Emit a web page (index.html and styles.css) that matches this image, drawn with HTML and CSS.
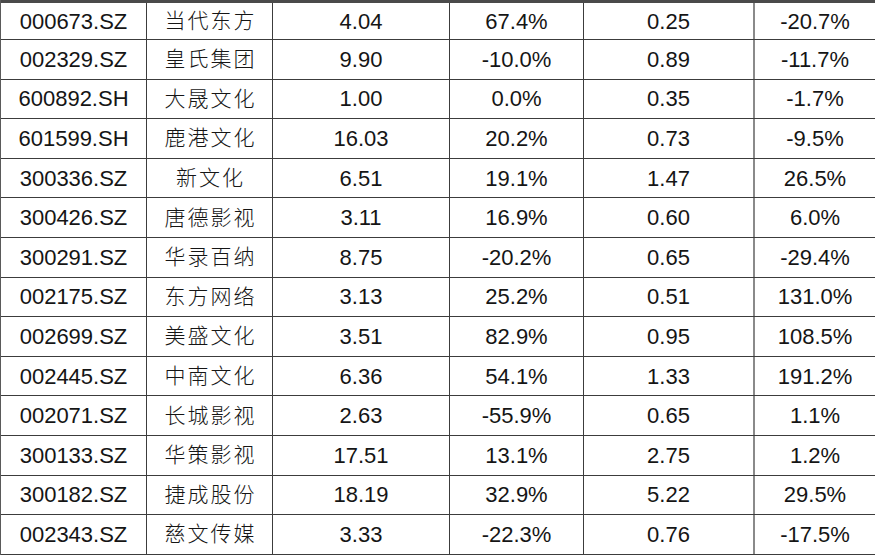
FILE: index.html
```html
<!DOCTYPE html>
<html lang="zh-CN">
<head>
<meta charset="utf-8">
<title>股票表</title>
<link rel="stylesheet" href="styles.css">
</head>
<body>
<div class="sheet">
  <div class="row"><div class="c code">000673.SZ</div><div class="c name">当代东方</div><div class="c">4.04</div><div class="c">67.4%</div><div class="c">0.25</div><div class="c">-20.7%</div></div>
  <div class="row"><div class="c code">002329.SZ</div><div class="c name">皇氏集团</div><div class="c">9.90</div><div class="c">-10.0%</div><div class="c">0.89</div><div class="c">-11.7%</div></div>
  <div class="row"><div class="c code">600892.SH</div><div class="c name">大晟文化</div><div class="c">1.00</div><div class="c">0.0%</div><div class="c">0.35</div><div class="c">-1.7%</div></div>
  <div class="row"><div class="c code">601599.SH</div><div class="c name">鹿港文化</div><div class="c">16.03</div><div class="c">20.2%</div><div class="c">0.73</div><div class="c">-9.5%</div></div>
  <div class="row"><div class="c code">300336.SZ</div><div class="c name">新文化</div><div class="c">6.51</div><div class="c">19.1%</div><div class="c">1.47</div><div class="c">26.5%</div></div>
  <div class="row"><div class="c code">300426.SZ</div><div class="c name">唐德影视</div><div class="c">3.11</div><div class="c">16.9%</div><div class="c">0.60</div><div class="c">6.0%</div></div>
  <div class="row"><div class="c code">300291.SZ</div><div class="c name">华录百纳</div><div class="c">8.75</div><div class="c">-20.2%</div><div class="c">0.65</div><div class="c">-29.4%</div></div>
  <div class="row"><div class="c code">002175.SZ</div><div class="c name">东方网络</div><div class="c">3.13</div><div class="c">25.2%</div><div class="c">0.51</div><div class="c">131.0%</div></div>
  <div class="row"><div class="c code">002699.SZ</div><div class="c name">美盛文化</div><div class="c">3.51</div><div class="c">82.9%</div><div class="c">0.95</div><div class="c">108.5%</div></div>
  <div class="row"><div class="c code">002445.SZ</div><div class="c name">中南文化</div><div class="c">6.36</div><div class="c">54.1%</div><div class="c">1.33</div><div class="c">191.2%</div></div>
  <div class="row"><div class="c code">002071.SZ</div><div class="c name">长城影视</div><div class="c">2.63</div><div class="c">-55.9%</div><div class="c">0.65</div><div class="c">1.1%</div></div>
  <div class="row"><div class="c code">300133.SZ</div><div class="c name">华策影视</div><div class="c">17.51</div><div class="c">13.1%</div><div class="c">2.75</div><div class="c">1.2%</div></div>
  <div class="row"><div class="c code">300182.SZ</div><div class="c name">捷成股份</div><div class="c">18.19</div><div class="c">32.9%</div><div class="c">5.22</div><div class="c">29.5%</div></div>
  <div class="row"><div class="c code">002343.SZ</div><div class="c name">慈文传媒</div><div class="c">3.33</div><div class="c">-22.3%</div><div class="c">0.76</div><div class="c">-17.5%</div></div>
</div>
</body>
</html>
```
FILE: styles.css
```css
html, body {
  margin: 0;
  padding: 0;
  background: #ffffff;
}
body {
  width: 875px;
  height: 558px;
  overflow: hidden;
  font-family: "Liberation Sans", Arial, sans-serif;
  color: #151515;
}
.sheet {
  width: 875px;
  display: flex;
  flex-direction: column;
  border-left: 1px solid #5a5a5a;
  box-sizing: border-box;
}
.row {
  display: grid;
  grid-template-columns: 146px 126px 177px 134px 171px 120px;
  height: 39.6px;
  box-sizing: border-box;
  border-bottom: 1px solid #3c3c3c;
}
.row:first-child {
  height: 40px;
  border-top: 3px solid #4a4a4a;
}
.c {
  display: flex;
  align-items: center;
  justify-content: center;
  font-size: 22px;
  border-right: 1px solid #3c3c3c;
  padding-top: 1px;
}
.c:nth-child(5) {
  border-right: 2px solid #8a8a8a;
}
.c:last-child {
  border-right: none;
}
.name {
  font-family: "Noto Sans CJK SC", sans-serif;
  font-weight: 300;
  font-size: 21px;
  letter-spacing: 2px;
  padding-left: 2px;
  padding-top: 0;
  padding-bottom: 4px;
}
```
